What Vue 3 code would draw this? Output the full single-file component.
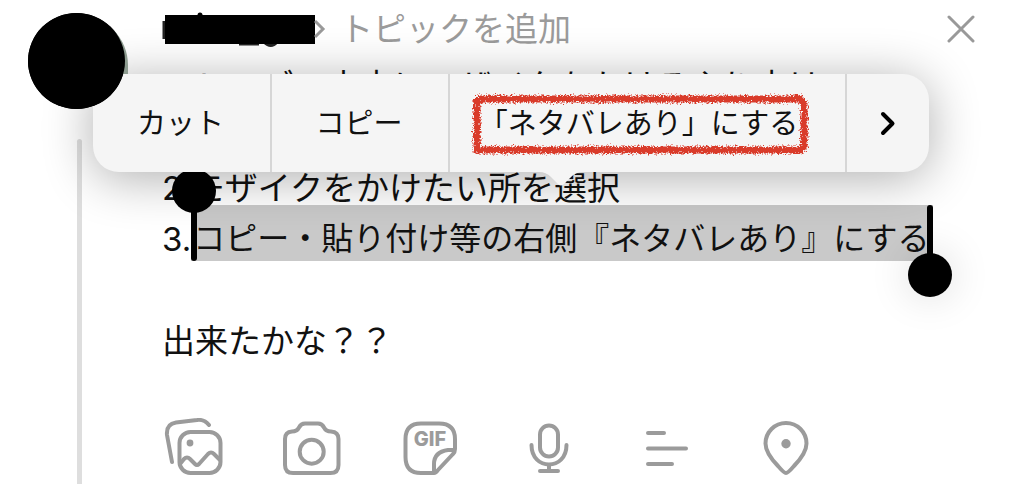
<script setup>
const firstLine = 'スレッズで本文にモザイクをかけるやり方は'
const secondLine = '2.モザイクをかけたい所を選択'
const selected = 'コピー・貼り付け等の右側『ネタバレあり』にする'
</script>

<template>
  <main class="composer">
    <aside class="rail">
      <div class="avatar"></div>
      <div class="thread"></div>
    </aside>

    <section class="content">
      <header class="head">
        <span class="name">
          <svg viewBox="0 0 154 36" aria-hidden="true">
            <path d="M2 10V28M77 33H97M102 31Q109 38 115 31" fill="none" stroke="#222" stroke-width="3" />
            <circle cx="38" cy="4" r="2.500" />
            <rect x="3" y="4" width="150" height="29" />
          </svg>
        </span>
        <svg class="crumb" viewBox="0 0 12 22" aria-hidden="true">
          <path d="M1 3L9 11L1 19" />
        </svg>
        <a class="topic" href="#">トピックを追加</a>
        <button class="close" aria-label="閉じる">
          <svg viewBox="0 0 28 28"><path d="M2 2L26 26M26 2L2 26" /></svg>
        </button>
      </header>

      <div class="editor" role="textbox" aria-multiline="true" aria-label="本文" contenteditable="true" spellcheck="false">
        <p>{{ firstLine }}</p>
        <p><br /></p>
        <p>{{ secondLine }}</p>
        <p>3.<mark>{{ selected }}<i class="handle start"></i><i class="handle end"></i></mark></p>
        <p><br /></p>
        <p>出来たかな？？</p>
      </div>

      <nav class="tools" aria-label="添付">
        <button aria-label="写真">
          <svg viewBox="0 0 60 60">
            <path d="M8 44L3 17Q2 6 12 4.500L33 2Q40 1 45 7" />
            <rect x="15.500" y="14" width="41" height="41" rx="11" />
            <path d="M16 46L20 41Q23 38 26 41L31 46Q33 48 35 46L44 36Q47 33 50 36L56 42" />
            <circle class="solid" cx="26" cy="25" r="3.400" />
          </svg>
        </button>
        <button aria-label="カメラ">
          <svg viewBox="0 0 60 60">
            <path d="M10 13.500Q15 13.500 17 9.500Q19 5.500 23 5.500H36Q40 5.500 42 9.500Q44 13.500 49 13.500Q56.500 14 56.500 21V47Q56.500 55 48.500 55H11Q3 55 3 47V21Q3 14 10 13.500Z" />
            <circle cx="29.700" cy="33.700" r="12" />
          </svg>
        </button>
        <button aria-label="GIF">
          <svg viewBox="0 0 60 60">
            <path d="M34 55H21Q5.500 55 5.500 39V21Q5.500 5.500 21 5.500H39Q55 5.500 55 21V31Q55 34 53 36L38 52Q36 55 34 55Z" />
            <path d="M54 32H48Q34 34 34 46V54" />
            <text x="30" y="28" text-anchor="middle">GIF</text>
          </svg>
        </button>
        <button aria-label="音声">
          <svg viewBox="0 0 60 60">
            <rect x="22" y="7.500" width="18" height="31" rx="9" />
            <path d="M13.500 27C13.500 53 48.500 53 48.500 27M31 47V53M22 53H40" />
          </svg>
        </button>
        <button aria-label="アンケート">
          <svg viewBox="0 0 60 60"><path d="M12 15H28M12 30.500H50M12 46H36" /></svg>
        </button>
        <button aria-label="位置情報">
          <svg viewBox="0 0 60 60">
            <path d="M32 55Q30 55 24 48Q11.500 35 11.500 25.500A20.500 20.500 0 0 1 52.500 25.500Q52.500 35 40 48Q34 55 32 55Z" />
            <circle class="solid" cx="32" cy="25.700" r="4.700" />
          </svg>
        </button>
      </nav>
    </section>

    <div class="menu" role="menu">
      <button role="menuitem" class="cut">カット</button>
      <button role="menuitem" class="copy">コピー</button>
      <button role="menuitem" class="spoiler">
        「ネタバレあり」にする
        <svg class="crayon" viewBox="0 0 340 64" aria-hidden="true">
          <filter id="rough" x="-5%" y="-15%" width="110%" height="130%">
            <feTurbulence type="fractalNoise" baseFrequency="0.6" numOctaves="2" seed="4" />
            <feDisplacementMap in="SourceGraphic" scale="8" xChannelSelector="R" yChannelSelector="G" />
          </filter>
          <path d="M7 6H330L334 10V54L330 57H7V6" filter="url(#rough)" />
        </svg>
      </button>
      <button role="menuitem" class="more" aria-label="次へ">
        <svg viewBox="0 0 16 26"><path d="M3 3L12.500 12.500L3 22" /></svg>
      </button>
      <svg class="tail" viewBox="0 0 44 16" aria-hidden="true">
        <path d="M0 0Q7 0 12 5L19 12Q22 15 25 12L32 5Q37 0 44 0Z" />
      </svg>
    </div>
  </main>
</template>

<style>
html, body { background: #fff; }
</style>

<style scoped>
.composer {
  position: relative;
  display: flex;
  min-height: 100vh;
  box-sizing: border-box;
  overflow: hidden;
  color: #111;
  font-family: Inter, "Noto Sans CJK JP", sans-serif;
}
button {
  margin: 0;
  padding: 0;
  border: 0;
  background: none;
  color: inherit;
  font: inherit;
}
svg { display: block; }
.rail {
  display: flex;
  flex-direction: column;
  align-items: flex-start;
  gap: 30px;
  flex: none;
  width: 104px;
  margin-left: 28px;
  padding-top: 13px;
  box-sizing: border-box;
}
.avatar {
  position: relative;
  z-index: 3;
  width: 97px;
  height: 96px;
  border-radius: 50%;
  background: #000;
}
.avatar::before {
  content: "";
  position: absolute;
  left: 14px;
  top: 2px;
  width: 86px;
  height: 59px;
  border-radius: 40px 56px 0 0;
  background: #8d9c90;
  z-index: -1;
}
.avatar::after {
  content: "";
  position: absolute;
  inset: 0;
  border-radius: 50%;
  background: #000;
}
.thread {
  flex: 1;
  width: 5px;
  margin-left: 49px;
  border-radius: 3px 3px 0 0;
  background: #dedede;
}
.content {
  flex: 1;
  min-width: 0;
  padding-left: 30px;
}
.head {
  display: flex;
  align-items: center;
  height: 58px;
  margin-bottom: 3px;
}
.name { width: 154px; }
.crumb {
  width: 12px;
  height: 22px;
  margin-left: -2px;
  fill: none;
  stroke: #999;
  stroke-width: 3;
}
.topic {
  margin-left: 14px;
  color: #9b9b9b;
  font-size: 33px;
  line-height: 48px;
  text-decoration: none;
  white-space: nowrap;
}
.close {
  margin-left: auto;
  margin-right: 49px;
}
.close svg {
  width: 28px;
  height: 28px;
  fill: none;
  stroke: #999;
  stroke-width: 3;
  stroke-linecap: round;
}
.editor {
  font-size: 33px;
  line-height: 51px;
  white-space: nowrap;
  outline: none;
}
.editor p { margin: 0; height: 51px; }
mark {
  position: relative;
  display: inline-block;
  height: 44px;
  margin: -9px 0 4px;
  padding: 12px 4px 0 2px;
  font-size: 32px;
  line-height: 44px;
  vertical-align: top;
  background: #c9c9c9;
  color: inherit;
}
.handle {
  position: absolute;
  top: 0;
  bottom: 0;
  width: 6px;
  border-radius: 3px;
  background: #000;
}
.handle::after {
  content: "";
  position: absolute;
  left: -19px;
  width: 44px;
  height: 44px;
  border-radius: 50%;
  background: #000;
}
.start { left: 0; }
.start::after { top: -36px; }
.end { right: 0; }
.end::after {
  top: 48px;
  box-shadow: 0 0 40px rgba(0, 0, 0, 0.15);
}
.tools {
  display: flex;
  gap: 58px;
  margin-top: 51px;
  margin-left: 2px;
}
.tools svg {
  width: 60px;
  height: 60px;
  fill: none;
  stroke: #9b9b9b;
  stroke-width: 4;
  stroke-linecap: round;
  stroke-linejoin: round;
}
.tools .solid,
.tools text {
  fill: #9b9b9b;
  stroke: none;
}
.tools text {
  font: 800 20px Inter, sans-serif;
}
.menu {
  position: absolute;
  z-index: 2;
  top: 74px;
  left: 93px;
  right: 95px;
  display: flex;
  height: 98px;
  border-radius: 26px;
  background: #f5f5f5;
  box-shadow: 0 6px 50px rgba(0, 0, 0, 0.32);
  color: #111;
  font-size: 29px;
  line-height: 44px;
  white-space: nowrap;
}
.menu button {
  box-sizing: border-box;
  padding-top: 2px;
}
.menu button + button { border-left: 2px solid #d6d6d6; }
.menu .cut { width: 177px; padding-right: 2px; }
.menu .copy { width: 178px; padding-right: 2px; }
.menu .spoiler {
  position: relative;
  flex: 1;
  padding-right: 18px;
}
.crayon {
  position: absolute;
  top: 19px;
  left: 20px;
  width: 340px;
  height: 64px;
  fill: none;
  stroke: #d93a2b;
  stroke-width: 7;
}
.more { width: 84px; }
.more svg {
  width: 16px;
  height: 26px;
  margin: 0 auto;
  fill: none;
  stroke: #000;
  stroke-width: 4;
  stroke-linecap: round;
  stroke-linejoin: round;
}
.tail {
  position: absolute;
  top: 98px;
  left: 446px;
  width: 44px;
  height: 16px;
  fill: #f5f5f5;
}
</style>
